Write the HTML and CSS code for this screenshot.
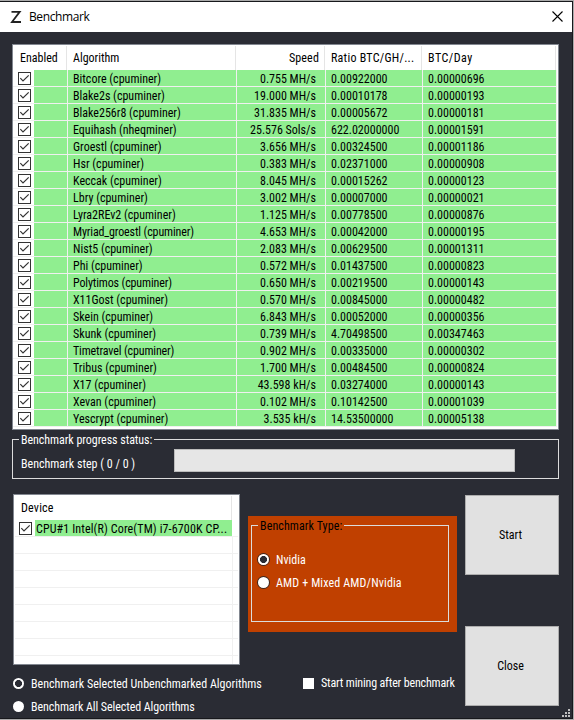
FILE: index.html
```html
<!DOCTYPE html>
<html lang="en">
<head>
<meta charset="utf-8">
<title>Benchmark</title>
<link rel="stylesheet" href="styles.css">
</head>
<body>
<main class="window">
  <header class="titlebar">
    <svg class="logo" width="12" height="14" viewBox="0 0 12 14"><path d="M1.5 1.8H9.7L2 12H11" fill="none" stroke="#222" stroke-width="1.8"/></svg>
    <span class="caption">Benchmark</span>
    <svg class="exit" width="11" height="11" viewBox="0 0 11 11"><path d="M.5 .5L10.5 10.5M10.5 .5L.5 10.5" stroke="#000" stroke-width="1.1"/></svg>
  </header>
  <section class="list">
    <div class="head"><span class="enabled">Enabled</span><span>Algorithm</span><span class="num">Speed</span><span class="ratio">Ratio BTC/GH/...</span><span class="day">BTC/Day</span></div>
    <div id="rows"></div>
  </section>
  <section class="group progress">
    <span class="legend">Benchmark progress status:</span>
    <span class="step">Benchmark step ( 0 / 0 )</span>
    <div class="bar"></div>
  </section>
  <div class="lower">
    <div class="left">
      <section class="devices">
        <div class="dhead"><span>Device</span></div>
        <div class="drow"><svg class="check" viewBox="0 0 13 13"><rect x=".5" y=".5" width="12" height="12" fill="#fff" stroke="#333"/><path d="M2.3 6.2L5 9L10.7 3.3" fill="none" stroke="#333" stroke-width="1.2"/></svg><span class="dname">CPU#1 Intel(R) Core(TM) i7-6700K CP...</span></div>
        <div class="empty"></div>
      </section>
      <div class="option first"><i class="radio on"></i><span>Benchmark Selected Unbenchmarked Algorithms</span></div>
      <div class="option"><i class="radio"></i><span class="all">Benchmark All Selected Algorithms</span></div>
    </div>
    <div class="middle">
      <section class="type">
        <div class="group">
          <span class="legend">Benchmark Type:</span>
          <div class="option"><i class="radio on"></i><span>Nvidia</span></div>
          <div class="option"><i class="radio"></i><span class="amd">AMD + Mixed AMD/Nvidia</span></div>
        </div>
      </section>
      <div class="after"><i class="box"></i><span>Start mining after benchmark</span></div>
    </div>
    <div class="actions"><button>Start</button><button>Close</button></div>
  </div>
  <svg class="grip" width="8" height="8" viewBox="0 0 8 8"><path d="M6 0h2v2H6zM3 3h2v2H3zM6 3h2v2H6zM0 6h2v2H0zM3 6h2v2H3zM6 6h2v2H6z" fill="#bfbfbf"/></svg>
</main>
<script src="rows.js"></script>
</body>
</html>
```
FILE: styles.css
```css
* { box-sizing: border-box; }
body {
  margin: 0; width: 574px; height: 720px; overflow: hidden; padding-top: 1px;
  background: #aaa;
  font: 12px/16px Roboto, "Liberation Sans", sans-serif; font-stretch: 87%;
  letter-spacing: 0; white-space: nowrap; color: #000;
}
.window { position: relative; width: 573px; height: 718px; background: #2a2c34; border: 1px solid #17181c; border-left: 0; }
.titlebar { height: 30px; background: #fff; display: flex; align-items: center; padding: 0 9px 0 10px; }
.logo { margin-top: -1px; }
.caption { margin: -1px 0 0 7px; font: 12px/16px "Open Sans", "Noto Sans", sans-serif; letter-spacing: -.4px; }
.exit { margin: -1px 0 0 auto; }
.list { width: 547px; height: 386px; margin: 12px 0 0 12px; border: 1px solid #828790; background: #fff; }
.head, .row { display: grid; grid-template-columns: 55px 169px 89px 97px 134px; }
.head { height: 25px; padding-top: 1px; width: 543px; grid-template-columns: 54px 169px 89px 97px 134px; }
.head span { border-right: 1px solid #e5e5e5; padding: 4px 0 0 6px; }
.head .enabled { padding-left: 7px; }
.head .num { padding-right: 5px; letter-spacing: .15px; }
.head .ratio { letter-spacing: .25px; }
.head .day { letter-spacing: .5px; }
.row { height: 17px; width: 544px; background: #90ee90; border-bottom: 1px solid #f0f0f0; line-height: 18px; }
.row > * { border-right: 1px solid #f0f0f0; padding-left: 5px; height: 16px; }
.row .cell { background: linear-gradient(to right, #fff 21px, #90ee90 21px); padding-top: 2px; }
.num { text-align: right; }
.row .num { padding-right: 9px; }
.row .long { letter-spacing: -.14px; }
.check { display: block; width: 13px; height: 13px; flex: none; }
.group { border: 1px solid #dcdcdc; position: relative; }
.legend { position: absolute; top: -8px; left: 6px; padding: 0 2px; background: #2a2c34; line-height: 16px; letter-spacing: -.05px; }
.progress { margin: 9px 0 0 12px; width: 547px; height: 40px; color: #fff; display: flex; }
.step { margin: 16px 0 0 8px; width: 153px; }
.bar { width: 341px; height: 23px; margin-top: 9px; background: #e6e6e6; border: 1px solid #bcbcbc; }
.lower { display: grid; grid-template-columns: 227px 209px 94px; gap: 8px; margin: 15px 0 0 13px; }
.devices { width: 227px; height: 171px; border: 1px solid #828790; background: #fff; }
.dhead { height: 25px; padding-top: 1px; }
.dhead span { display: block; width: 218px; height: 24px; border-right: 1px solid #e5e5e5; padding: 4px 0 0 7px; letter-spacing: .2px; }
.drow { height: 16px; display: flex; padding: 2px 0 0 5px; }
.dname { height: 16px; width: 197px; margin: -2px 0 0 3px; padding-left: 1px; background: #90ee90; line-height: 18px; letter-spacing: .13px; }
.empty { height: 128px; margin: 0 1px; background: linear-gradient(#f0f0f0, #f0f0f0) 217px 0 / 1px 128px no-repeat, repeating-linear-gradient(#f0f0f0 0 1px, #fff 1px 17px); }
.option { display: flex; align-items: center; height: 23px; color: #fff; }
.option span { margin-left: 7px; }
.option .all { letter-spacing: -.09px; }
.option .amd { letter-spacing: .14px; }
.first { margin-top: 7px; }
.radio { width: 11px; height: 11px; border-radius: 50%; background: #fff; flex: none; }
.radio.on { background: radial-gradient(circle, #2a2c34 0 3.2px, #fff 3.8px); }
.middle { padding-top: 22px; }
.type { height: 116px; background: #c04000; padding: 9px 6px 0 3px; }
.type .group { width: 198px; height: 97px; padding: 22px 0 0 6px; }
.type .legend { background: #c04000; padding: 0 2px; color: #000; letter-spacing: .1px; }
.type .radio { box-shadow: 0 0 0 1px #3b2820; }
.after { margin: 43px 0 0 55px; display: flex; align-items: center; color: #fff; letter-spacing: -.16px; }
.box { width: 11px; height: 11px; background: #fff; margin-right: 7px; flex: none; }
.actions { display: flex; flex-direction: column; gap: 51px; padding-top: 1px; }
button { width: 94px; height: 80px; background: #e1e1e1; border: 1px solid #adadad; font: inherit; color: #000; padding: 0 3px 0 0; }
.grip { position: absolute; right: 2px; bottom: 1px; }
```
FILE: rows.js
```js
const data = `Bitcore|0.755 MH/s|0.00922000|0.00000696
Blake2s|19.000 MH/s|0.00010178|0.00000193
Blake256r8|31.835 MH/s|0.00005672|0.00000181
Equihash|25.576 Sols/s|622.02000000|0.00001591
Groestl|3.656 MH/s|0.00324500|0.00001186
Hsr|0.383 MH/s|0.02371000|0.00000908
Keccak|8.045 MH/s|0.00015262|0.00000123
Lbry|3.002 MH/s|0.00007000|0.00000021
Lyra2REv2|1.125 MH/s|0.00778500|0.00000876
Myriad_groestl|4.653 MH/s|0.00042000|0.00000195
Nist5|2.083 MH/s|0.00629500|0.00001311
Phi|0.572 MH/s|0.01437500|0.00000823
Polytimos|0.650 MH/s|0.00219500|0.00000143
X11Gost|0.570 MH/s|0.00845000|0.00000482
Skein|6.843 MH/s|0.00052000|0.00000356
Skunk|0.739 MH/s|4.70498500|0.00347463
Timetravel|0.902 MH/s|0.00335000|0.00000302
Tribus|1.700 MH/s|0.00484500|0.00000824
X17|43.598 kH/s|0.03274000|0.00000143
Xevan|0.102 MH/s|0.10142500|0.00001039
Yescrypt|3.535 kH/s|14.53500000|0.00005138`.split("\n").map(line => line.split("|"));
const check = document.querySelector(".check").outerHTML;
document.getElementById("rows").innerHTML = data.map(([name, speed, ratio, day]) =>
  `<div class="row"><div class="cell">${check}</div><span class="name${/^(Myriad|Timetravel|Polytimos)/.test(name) ? " long" : ""}">${name} (${name === "Equihash" ? "nheqminer" : "cpuminer"})</span><span class="num">${speed}</span><span>${ratio}</span><span>${day}</span></div>`).join("");
```
